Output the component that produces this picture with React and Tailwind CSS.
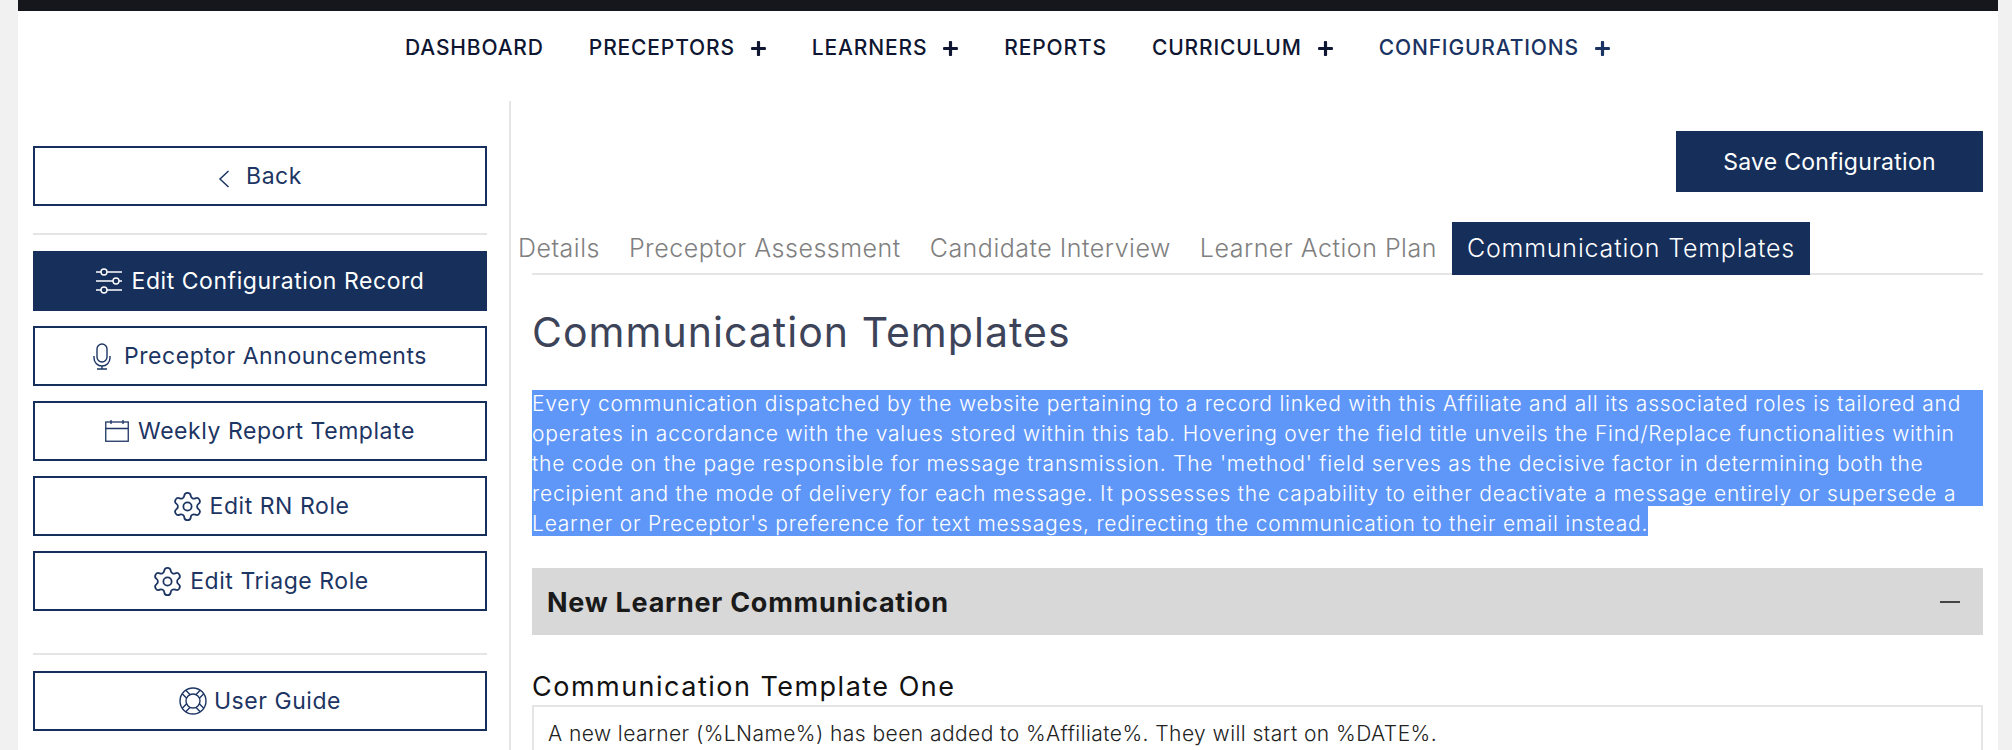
import React from 'react';
import { Settings } from 'lucide-react';
import { FaPlus } from 'react-icons/fa';

const navItems = [
  { label: 'DASHBOARD' },
  { label: 'PRECEPTORS', plus: true },
  { label: 'LEARNERS', plus: true },
  { label: 'REPORTS' },
  { label: 'CURRICULUM', plus: true },
  { label: 'CONFIGURATIONS', plus: true, current: true },
];

const tabs = ['Details', 'Preceptor Assessment', 'Candidate Interview', 'Learner Action Plan'];

const introLines = [
  'Every communication dispatched by the website pertaining to a record linked with this Affiliate and all its associated roles is tailored and',
  'operates in accordance with the values stored within this tab. Hovering over the field title unveils the Find/Replace functionalities within',
  "the code on the page responsible for message transmission. The 'method' field serves as the decisive factor in determining both the",
  "recipient and the mode of delivery for each message. It possesses the capability to either deactivate a message entirely or supersede a",
];

// Icônes dessinées à la main
const BackIcon = () => (
  <svg width="12" height="18" viewBox="0 0 12 18" fill="none" stroke="currentColor" strokeWidth="1.5" className="mt-[6px]">
    <path d="M10.5 1 2 9l8.5 8" />
  </svg>
);

const SlidersIcon = () => (
  <svg width="26" height="26" viewBox="0 0 26 26" fill="none" stroke="currentColor" strokeWidth="1.4">
    <path d="M0 4h5M11 4h15M0 13h17M23 13h3M0 22h5M11 22h15" />
    <circle cx="8" cy="4" r="3" />
    <circle cx="20" cy="13" r="3" />
    <circle cx="8" cy="22" r="3" />
  </svg>
);

const MicIcon = () => (
  <svg width="18" height="27" viewBox="0 0 18 27" fill="none" stroke="currentColor" strokeWidth="1.4">
    <rect x="4" y="1" width="10" height="18" rx="5" />
    <path d="M1 13v2a8 8 0 0 0 16 0v-2M9 23v3M4 26h10" />
  </svg>
);

const CalendarIcon = () => (
  <svg width="24" height="22" viewBox="0 0 24 22" fill="none" stroke="currentColor" strokeWidth="1.3">
    <rect x="0.75" y="2" width="22.5" height="19.25" />
    <path d="M1 8.5h22M6 0v4M18 0v4" />
  </svg>
);

const GearIcon = () => <Settings size={33} strokeWidth={1.3} />;

const GuideIcon = () => (
  <svg width="28" height="28" viewBox="0 0 28 28" fill="none" stroke="currentColor" strokeWidth="1.4">
    <circle cx="14" cy="14" r="13" />
    <circle cx="14" cy="14" r="7" />
    {[45, 135, 225, 315].map(angle => (
      <path key={angle} d="M11.5 1.3v6.2M16.5 1.3v6.2" transform={`rotate(${angle} 14 14)`} />
    ))}
  </svg>
);

const SideButton = ({ icon: Icon, gap = 'gap-[6px]', active, children }) => (
  <button
    className={`flex h-[60px] w-full items-center justify-center ${gap} border-2 border-[#162f5b] text-[23px] tracking-[0.024em] ${
      active ? 'bg-[#162f5b] text-white' : 'bg-white text-[#1d3563]'
    }`}
  >
    <Icon />
    <span>{children}</span>
  </button>
);

const App = () => {
  return (
    <div className="h-screen overflow-hidden bg-[#f1f1f1] pl-[18px] pr-[14px] font-['Inter',sans-serif]">
      <div className="flex h-full flex-col bg-white">
        <div className="h-[11px] shrink-0 bg-[#16161d]" />

        {/* Menu principal */}
        <nav className="flex h-[90px] shrink-0 items-center justify-center gap-[45px] pb-[16px]">
          {navItems.map(item => (
            <a
              key={item.label}
              className={`flex items-center gap-[15px] text-[21px] font-medium tracking-[0.04em] ${
                item.current ? 'text-[#1a3362]' : 'text-[#0e1631]'
              }`}
            >
              {item.label}
              {item.plus && <FaPlus className="h-[17px] w-[17px]" />}
            </a>
          ))}
        </nav>

        <div className="flex min-h-0 flex-1">
          {/* Colonne de gauche */}
          <aside className="w-[493px] shrink-0 border-r-2 border-[#e5e5e5] pl-[15px] pr-[22px] pt-[45px]">
            <SideButton icon={BackIcon} gap="gap-[16px]">Back</SideButton>
            <div className="mb-[16px] mt-[27px] h-[2px] bg-[#e5e5e5]" />
            <div className="flex flex-col gap-[15px]">
              <SideButton icon={SlidersIcon} gap="gap-[10px]" active>Edit Configuration Record</SideButton>
              <SideButton icon={MicIcon} gap="gap-[13px]">Preceptor Announcements</SideButton>
              <SideButton icon={CalendarIcon} gap="gap-[9px]">Weekly Report Template</SideButton>
              <SideButton icon={GearIcon}>Edit RN Role</SideButton>
              <SideButton icon={GearIcon}>Edit Triage Role</SideButton>
            </div>
            <div className="mb-[16px] mt-[42px] h-[2px] bg-[#e5e5e5]" />
            <SideButton icon={GuideIcon} gap="gap-[7px]">User Guide</SideButton>
          </aside>

          {/* Contenu */}
          <main className="min-w-0 flex-1 pl-[21px] pr-[15px] pt-[30px]">
            <div className="flex justify-end">
              <button className="h-[61px] w-[307px] bg-[#152e5a] pt-[2px] text-[23px] tracking-[0.012em] text-white">
                Save Configuration
              </button>
            </div>

            <div className="mt-[30px] flex h-[53px] items-end border-b-2 border-[#e5e5e5]">
              <div className="-mb-[2px] -ml-[14px] flex h-[53px] items-center gap-[29px] text-[25px] font-light tracking-[0.02em] text-[#808080]">
                {tabs.map(tab => (
                  <span key={tab}>{tab}</span>
                ))}
                <span className="-ml-[14px] flex h-[53px] items-center bg-[#152e5a] px-[15px] tracking-[0.033em] text-white">
                  Communication Templates
                </span>
              </div>
            </div>

            <h1 className="mt-[31px] text-[41px] leading-[52px] tracking-[0.025em] text-[#3d4459]">Communication Templates</h1>

            {/* Texte sélectionné */}
            <div className="mt-[32px] text-[21px] font-light leading-[30px] tracking-[0.037em] text-white">
              <div className="h-[116px] bg-[#5f97f9]">
                <div className="-translate-y-[1px]">
                  {introLines.map(line => (
                    <div key={line} className="whitespace-nowrap">{line}</div>
                  ))}
                </div>
              </div>
              <div className="h-[30px] w-fit whitespace-nowrap bg-[#5f97f9] leading-[36px]">
                Learner or Preceptor's preference for text messages, redirecting the communication to their email instead.
              </div>
            </div>

            <div className="mt-[32px] flex h-[67px] items-center justify-between bg-[#d8d8d8] pl-[15px] pr-[23px] pt-[3px]">
              <h2 className="text-[27px] font-bold tracking-[0.027em] text-[#1a1a1a]">New Learner Communication</h2>
              <div className="-mt-[3px] h-[2px] w-[20px] bg-[#444444]" />
            </div>

            <label className="mt-[34px] block text-[27px] leading-[36px] tracking-[0.055em] text-[#111111]">Communication Template One</label>
            <div className="h-[60px] border-2 border-[#e5e5e5] px-[14px] pt-[11px] text-[21px] font-light tracking-[0.021em] text-[#222222]">
              A new learner (%LName%) has been added to %Affiliate%. They will start on %DATE%.
            </div>
          </main>
        </div>
      </div>
    </div>
  );
};

export default App;
